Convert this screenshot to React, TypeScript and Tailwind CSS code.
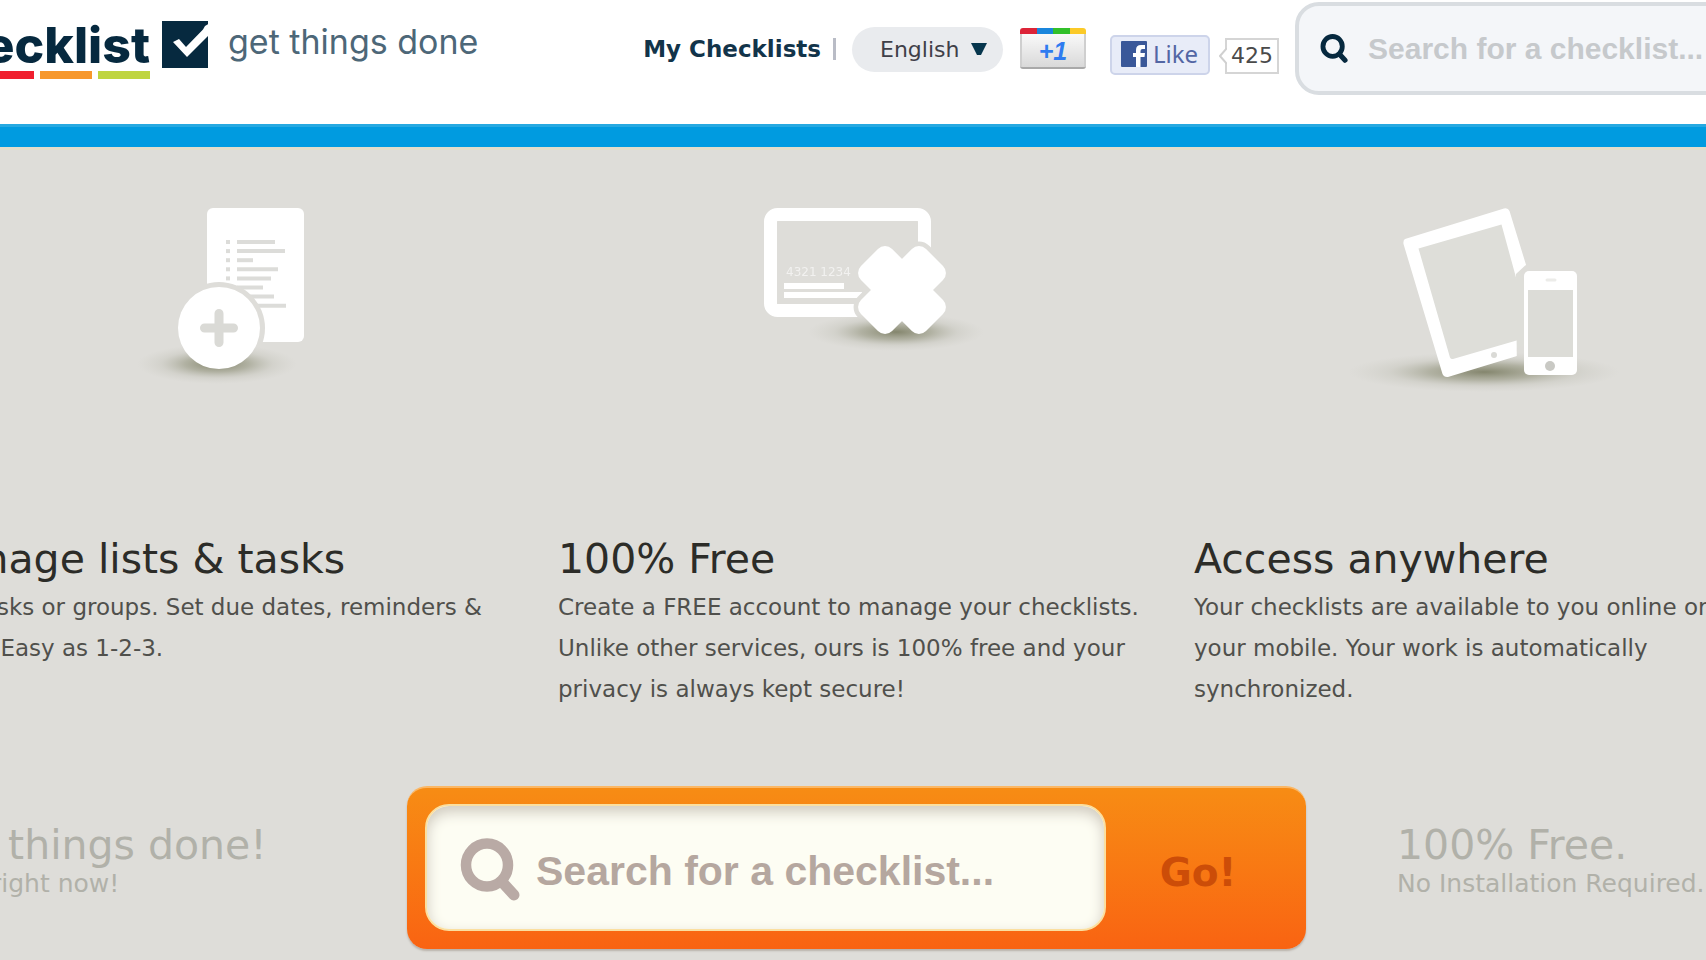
import React from "react";

function SearchIcon({ className }: { className: string }) {
  return (
    <svg viewBox="0 0 60 63" className={className} fill="none" stroke="currentColor" aria-hidden="true">
      <ellipse cx="27" cy="27" rx="21" ry="21.500" strokeWidth="10.500" />
      <path d="M43 45 L54 57" strokeWidth="11" strokeLinecap="round" />
    </svg>
  );
}

function ShadowGradient({ id }: { id: string }) {
  return (
    <radialGradient id={id}>
      <stop offset="0" stopColor="#74765a" stopOpacity="0.85" />
      <stop offset="0.4" stopColor="#84866c" stopOpacity="0.5" />
      <stop offset="0.7" stopColor="#a0a190" stopOpacity="0.18" />
      <stop offset="1" stopColor="#b5b5a8" stopOpacity="0" />
    </radialGradient>
  );
}

function TasksIcon() {
  const ends = [205, 215, 183, 208, 201, 193, 204, 216];
  return (
    <svg viewBox="0 0 300 210" className="mx-auto block h-[210px] w-[300px]" aria-hidden="true">
      <defs>
        <ShadowGradient id="shadow-tasks" />
        <mask id="cut-tasks">
          <rect width="300" height="210" fill="#fff" />
          <circle cx="149" cy="138" r="46" fill="#000" />
        </mask>
      </defs>
      <ellipse cx="147" cy="174" rx="80" ry="20" fill="url(#shadow-tasks)" />
      <g mask="url(#cut-tasks)">
        <rect x="137" y="18" width="97" height="134" rx="6" fill="#fff" />
        {ends.map((end, i) => (
          <g key={end} stroke="#dcdcd9" strokeWidth="4">
            <path d={`M156 ${52 + i * 9.1}h4`} />
            <path d={`M167 ${52 + i * 9.1}H${end}`} />
          </g>
        ))}
      </g>
      <circle cx="149" cy="138" r="41" fill="#fff" />
      <path d="M134.500 138h29M149 123.500v29" stroke="#dadad6" strokeWidth="9" strokeLinecap="round" />
    </svg>
  );
}

function FreeIcon() {
  return (
    <svg viewBox="0 0 300 210" className="mx-auto block h-[210px] w-[300px]" aria-hidden="true">
      <defs>
        <ShadowGradient id="shadow-free" />
        <mask id="cut-free">
          <rect width="300" height="210" fill="#fff" />
          <g transform="rotate(45 196 100)" fill="#000" stroke="#000" strokeWidth="9">
            <rect x="150" y="78" width="92" height="44" rx="10" />
            <rect x="174" y="54" width="44" height="92" rx="10" />
          </g>
        </mask>
      </defs>
      <ellipse cx="190" cy="142" rx="88" ry="19" fill="url(#shadow-free)" />
      <g mask="url(#cut-free)">
        <rect x="64.500" y="24.500" width="154" height="96" rx="7" fill="none" stroke="#fff" strokeWidth="13" />
        <text x="80" y="86" fontSize="12" fill="#fff" fillOpacity="0.6" fontFamily="DejaVu Sans, sans-serif">
          4321 1234
        </text>
        <path d="M78 96H138M78 105H156" stroke="#fff" strokeWidth="6" />
      </g>
      <g transform="rotate(45 196 100)" fill="#fff">
        <rect x="150" y="78" width="92" height="44" rx="10" />
        <rect x="174" y="54" width="44" height="92" rx="10" />
      </g>
    </svg>
  );
}

function DevicesIcon() {
  return (
    <svg viewBox="0 0 300 210" className="mx-auto block h-[210px] w-[300px]" aria-hidden="true">
      <defs>
        <ShadowGradient id="shadow-devices" />
        <mask id="cut-devices">
          <rect width="300" height="210" fill="#fff" />
          <path d="M174 84L186 73L205 76V192H175Z" fill="#000" />
        </mask>
      </defs>
      <ellipse cx="142" cy="182" rx="136" ry="20" fill="url(#shadow-devices)" />
      <path d="M69 55L161 26L200 150L107 180Z" fill="#deded9" />
      <g mask="url(#cut-devices)">
        <path
          fillRule="evenodd"
          fill="#fff"
          d="M63 49L162 18.500Q166 17.500 167.500 21L208 153Q208 156 205 157L106 187Q102 187.500 100.500 184L61.500 54Q61 50 63 49ZM76.500 58.500L108 167.500Q109 169.500 111 169L190 146L159.500 34.500Z"
        />
        <circle cx="152" cy="165" r="3" fill="#dadad6" />
      </g>
      <rect x="182" y="81" width="53" height="104" rx="5" fill="#fff" />
      <rect x="186" y="100" width="45" height="67" fill="#dcdcd7" />
      <path d="M205 90h8" stroke="#ecece9" strokeWidth="3" strokeLinecap="round" />
      <circle cx="208" cy="176" r="5" fill="#c9c9c4" />
    </svg>
  );
}

const features = [
  {
    icon: <TasksIcon />,
    title: "Manage lists & tasks",
    text: "Add tasks or groups. Set due dates, reminders & notes. Easy as 1-2-3.",
  },
  {
    icon: <FreeIcon />,
    title: "100% Free",
    text: "Create a FREE account to manage your checklists. Unlike other services, ours is 100% free and your privacy is always kept secure!",
  },
  {
    icon: <DevicesIcon />,
    title: "Access anywhere",
    text: "Your checklists are available to you online or on your mobile. Your work is automatically synchronized.",
  },
];

function Logo() {
  return (
    <a href="#" className="-ml-[77px] flex shrink-0 items-start pt-5 text-[#06293f]">
      <span className="flex w-[227px] flex-col font-['Inter',sans-serif]">
        <span className="self-end text-[50px] leading-[51px] font-extrabold">checklist</span>
        <span className="flex h-2 justify-end gap-[6px]">
          <span className="w-[52px] bg-[#0a9bdc]" />
          <span className="w-[52px] bg-[#f01f2e]" />
          <span className="w-[52px] bg-[#f7982c]" />
          <span className="w-[52px] bg-[#bfd540]" />
        </span>
      </span>
      <svg viewBox="0 0 48 48" className="ml-3 h-12 w-12" aria-hidden="true">
        <path d="M0 1H46V48H0Z" fill="#06293f" />
        <path d="M11 22L17 19L24 27L41 9.500L43 6L48 3V14L25 37Z" fill="#fff" />
      </svg>
      <span className="ml-[18px] text-[34px] leading-[44px] text-[#4d6778] font-['Inter',sans-serif]">
        get things done
      </span>
    </a>
  );
}

function Header() {
  return (
    <header className="flex h-[124px] items-start bg-white">
      <Logo />
      <nav className="ml-auto flex shrink-0 items-start">
        <a href="#" className="pt-[34px] text-[23px] leading-[30px] font-bold text-[#12344a]">
          My Checklists
        </a>
        <span className="mt-[38px] ml-3 h-[22px] w-[3px] bg-[#b9bcc6]" />
        <label className="relative mt-[27px] ml-4 block">
          <span className="sr-only">Language</span>
          <select className="h-[45px] w-[151px] appearance-none rounded-full bg-[#e9ebee] pl-7 text-[22px] text-[#3f3f48]">
            <option>English</option>
          </select>
          <svg viewBox="0 0 16 12" className="pointer-events-none absolute top-4 right-4 h-3 w-4" aria-hidden="true">
            <path d="M0 0H16L10 12H6Z" fill="#06364d" />
          </svg>
        </label>
        <button
          type="button"
          className="mt-7 ml-[17px] flex h-[41px] w-[66px] flex-col overflow-hidden rounded-[3px] border-b-2 border-[#a9a9a9] bg-linear-to-b from-white to-[#d9d9d9]"
        >
          <span className="flex h-[6px] w-full shrink-0">
            <span className="flex-1 bg-[#dc2438]" />
            <span className="flex-1 bg-[#1a86dc]" />
            <span className="flex-1 bg-[#32c02a]" />
            <span className="flex-1 bg-[#fbca28]" />
          </span>
          <span className="w-full border-x-2 border-[#cfcfcf] text-center text-[25px] leading-[34px] font-bold text-[#2f7cf0] italic font-['Liberation_Sans',sans-serif]">
            +1
          </span>
        </button>
        <button
          type="button"
          className="mt-[35px] ml-6 flex h-10 w-[100px] items-center gap-[6px] rounded-[5px] border-2 border-[#cdd4ea] bg-[#e8ecf8] pb-[2px] pl-[9px] text-[24px] text-[#5366a4] font-['Noto_Sans',sans-serif]"
        >
          <svg viewBox="0 0 26 26" className="h-[26px] w-[26px] shrink-0" aria-hidden="true">
            <rect width="26" height="26" rx="1" fill="#3a5899" />
            <path d="M15 26V16H12V12H15V9Q15 4 20 4H24V8H21.500Q19.500 8 19.500 10V12H24L23.500 16H19.500V26Z" fill="#fff" />
          </svg>
          Like
        </button>
        <span className="relative mt-[38px] ml-[15px] flex h-9 w-[54px] items-center justify-center border-2 border-[#d5d5d5] bg-white pb-[2px] text-[22px] text-[#4a4a4a]">
          <svg viewBox="0 0 8 16" className="absolute top-2 -left-2 h-4 w-2" aria-hidden="true">
            <path d="M8 0L1 8L8 16" fill="#fff" stroke="#d0d0d0" strokeWidth="2" />
          </svg>
          425
        </span>
      </nav>
      <form className="-mr-10 mt-[2px] ml-4 flex h-[93px] w-[451px] shrink-0 items-center rounded-[24px] border-4 border-[#d9dde1] bg-[#f4f6f9] pl-[21px]">
        <SearchIcon className="h-[29px] w-7 shrink-0 text-[#06293f]" />
        <input
          type="text"
          aria-label="Search checklists"
          placeholder="Search for a checklist..."
          className="ml-5 min-w-0 flex-1 bg-transparent text-[30px] font-bold outline-none placeholder:text-[#c6c9cc] font-['Liberation_Sans',sans-serif]"
        />
      </form>
    </header>
  );
}

export default function App() {
  return (
    <div className="min-h-screen overflow-hidden bg-[#deddd9] font-['DejaVu_Sans',sans-serif]">
      <Header />
      <div className="h-[23px] border-t-[3px] border-[#27a9e1] bg-[#009be0]" />
      <main className="border-t-[3px] border-[#e2decb] pt-10">
        <section className="-mr-[84px] -ml-[78px] grid grid-cols-3 gap-10">
          {features.map((feature) => (
            <article key={feature.title}>
              {feature.icon}
              <h2 className="mt-[134px] text-[41px] leading-[50px] text-[#2c2c28]">{feature.title}</h2>
              <p className="mt-[3px] text-[23px] leading-[41px] text-[#50504c]">{feature.text}</p>
            </article>
          ))}
        </section>
        <section className="mt-[76px] -ml-[78px] flex items-start text-[#b1b1a9]">
          <div className="w-[485px] shrink-0 pt-9">
            <h3 className="text-[41px] leading-[46px]">Get things done!</h3>
            <p className="text-[25px] leading-[32px]">Start right now!</p>
          </div>
          <form className="flex h-[163px] flex-1 rounded-[20px] border-t-2 border-[#fbb765] bg-linear-to-b from-[#f78c14] to-[#f96312] pt-4 pb-[18px] pl-[18px] shadow-[0_2px_2px_#b9b2aa]">
            <label className="flex flex-1 items-center rounded-[24px] border-2 border-[#fbdf9f] bg-[#fdfdf3] pt-1 pl-[33px] shadow-[inset_0_6px_14px_#cfcabf]">
              <SearchIcon className="h-[63px] w-[60px] shrink-0 text-[#b9aaa5]" />
              <span className="sr-only">Search</span>
              <input
                type="text"
                placeholder="Search for a checklist..."
                className="ml-4 min-w-0 flex-1 bg-transparent pt-1 text-[41px] font-bold outline-none placeholder:text-[#b5a79f] font-['Liberation_Sans',sans-serif]"
              />
            </label>
            <button type="button" className="w-[200px] pt-3 pr-4 text-[39px] font-bold text-[#cc4d08]">
              Go!
            </button>
          </form>
          <div className="ml-[91px] w-[309px] shrink-0 pt-9 whitespace-nowrap">
            <h3 className="text-[41px] leading-[46px]">100% Free.</h3>
            <p className="text-[25px] leading-[32px]">No Installation Required.</p>
          </div>
        </section>
      </main>
    </div>
  );
}
